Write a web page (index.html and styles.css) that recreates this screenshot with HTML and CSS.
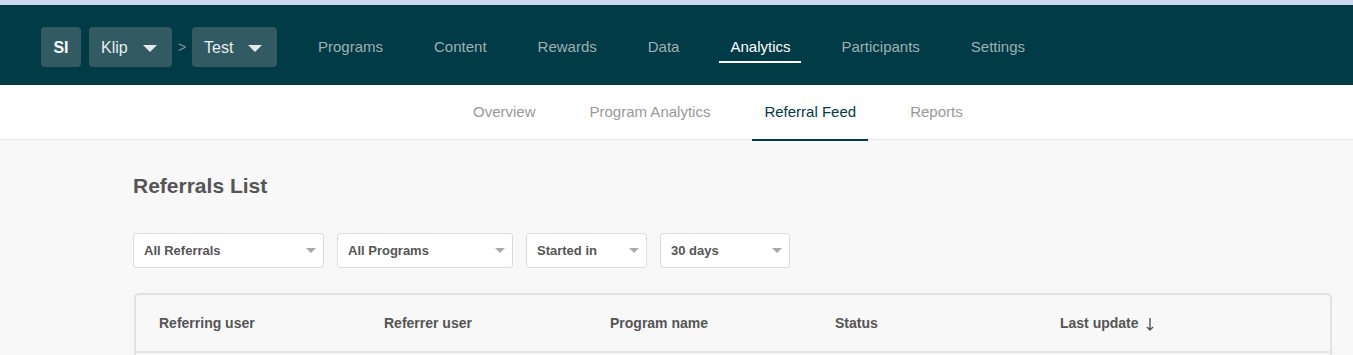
FILE: index.html
```html
<!DOCTYPE html>
<html lang="en">
<head>
    <meta charset="UTF-8">
    <meta name="viewport" content="width=device-width, initial-scale=1.0">
    <title>Referral Feed</title>
    <link rel="stylesheet" href="styles.css">
</head>
<body>
    <div class="top-strip"></div>

    <header class="topbar">
        <div class="crumbs">
            <span class="crumb avatar">SI</span>
            <span class="crumb select">Klip <span class="caret"></span></span>
            <span class="sep">&gt;</span>
            <span class="crumb select">Test <span class="caret"></span></span>
        </div>
        <nav class="main-nav">
            <a href="#">Programs</a>
            <a href="#">Content</a>
            <a href="#">Rewards</a>
            <a href="#">Data</a>
            <a href="#" class="active">Analytics</a>
            <a href="#">Participants</a>
            <a href="#">Settings</a>
        </nav>
    </header>

    <nav class="sub-nav">
        <a href="#">Overview</a>
        <a href="#">Program Analytics</a>
        <a href="#" class="active">Referral Feed</a>
        <a href="#">Reports</a>
    </nav>

    <main class="content">
        <h1>Referrals List</h1>

        <div class="filters">
            <div class="filter w-referrals">All Referrals <span class="small-caret"></span></div>
            <div class="filter w-programs">All Programs <span class="small-caret"></span></div>
            <div class="filter w-started">Started in <span class="small-caret"></span></div>
            <div class="filter w-days">30 days <span class="small-caret"></span></div>
        </div>

        <div class="table-card">
            <div class="table-head">
                <span>Referring user</span>
                <span>Referrer user</span>
                <span>Program name</span>
                <span>Status</span>
                <span>Last update
                    <svg class="sort-arrow" width="8" height="13" viewBox="0 0 8 13">
                        <path d="M4 0 V12 M1 9 L4 12 L7 9" fill="none" stroke="#555" stroke-width="1.4"/>
                    </svg>
                </span>
            </div>
        </div>
    </main>
</body>
</html>
```

FILE: styles.css
```css
body {
    margin: 0;
    font-family: "Liberation Sans", Arial, sans-serif;
    background-color: #f8f8f8;
    color: #555;
}
a {
    text-decoration: none;
}
.top-strip {
    height: 5px;
    background-color: #cbd8ef;
}
.topbar {
    height: 80px;
    box-sizing: border-box;
    padding: 4px 0 0 41px;
    background-color: #013b46;
    display: flex;
    align-items: center;
}
.crumbs {
    display: flex;
    align-items: center;
}
.crumb {
    height: 40px;
    border-radius: 4px;
    background-color: #315a63;
    color: #e8eeef;
    display: flex;
    align-items: center;
    box-sizing: border-box;
    padding-top: 2px;
}
.avatar {
    width: 40px;
    justify-content: center;
    font-weight: bold;
    font-size: 16px;
    color: #fff;
    margin-right: 8px;
}
.select {
    font-size: 16px;
    padding: 2px 15px 0 12px;
}
.select:nth-of-type(2) {
    width: 83px;
}
.select:last-child {
    width: 85px;
}
.caret {
    margin-left: auto;
    width: 0;
    height: 0;
    border-left: 7px solid transparent;
    border-right: 7px solid transparent;
    border-top: 7px solid #e4eaeb;
}
.sep {
    color: #7d9298;
    font-size: 14px;
    width: 20px;
    text-align: center;
}
.main-nav {
    display: flex;
    gap: 29px;
    margin-left: 30px;
    height: 100%;
}
.main-nav a {
    font-size: 15px;
    color: #9eb0b4;
    padding: 0 11px 2px;
    display: flex;
    align-items: center;
    position: relative;
}
.main-nav a.active {
    color: #fff;
}
.main-nav a.active::after {
    content: "";
    position: absolute;
    left: 0;
    right: 0;
    top: 52px;
    height: 2px;
    background-color: #fff;
}
.sub-nav {
    height: 55px;
    background-color: #fff;
    border-bottom: 1px solid #e3e3e3;
    display: flex;
    gap: 30px;
    padding: 0 0 1px 461px;
    box-sizing: border-box;
}
.sub-nav a {
    font-size: 15px;
    color: #999;
    padding: 0 12px;
    display: flex;
    align-items: center;
    position: relative;
}
.sub-nav a.active {
    color: #023a45;
}
.sub-nav a.active::after {
    content: "";
    position: absolute;
    left: 0;
    right: 0;
    bottom: -3px;
    height: 2px;
    background-color: #023a45;
}
.content {
    padding: 0 21px 0 133px;
}
.content h1 {
    margin: 0;
    padding-top: 34px;
    font-size: 21px;
    line-height: 24px;
    color: #555;
}
.filters {
    display: flex;
    gap: 13px;
    margin-top: 35px;
}
.filter {
    height: 35px;
    box-sizing: border-box;
    background-color: #fff;
    border: 1px solid #dcdcdc;
    border-radius: 3px;
    display: flex;
    align-items: center;
    padding: 0 7px 0 10px;
    font-size: 13px;
    font-weight: bold;
    color: #555;
}
.w-referrals { width: 191px; }
.w-programs { width: 176px; }
.w-started { width: 121px; }
.w-days { width: 130px; }
.small-caret {
    margin-left: auto;
    width: 0;
    height: 0;
    border-left: 5px solid transparent;
    border-right: 5px solid transparent;
    border-top: 5px solid #aaa;
}
.table-card {
    margin-top: 25px;
    margin-left: 1px;
    background-color: #f8f8f8;
    border: 2px solid #e2e2e2;
    border-bottom: none;
    border-radius: 5px 5px 0 0;
    height: 80px;
}
.table-head {
    display: grid;
    grid-template-columns: 225px 226px 225px 225px 225px;
    padding-left: 23px;
    height: 56px;
    align-items: center;
    border-bottom: 2px solid #e4e4e4;
    font-size: 14px;
    font-weight: bold;
    color: #555;
}
.table-head span {
    display: flex;
    align-items: center;
}
.sort-arrow {
    margin-left: 7px;
    position: relative;
    top: 1px;
}
```
